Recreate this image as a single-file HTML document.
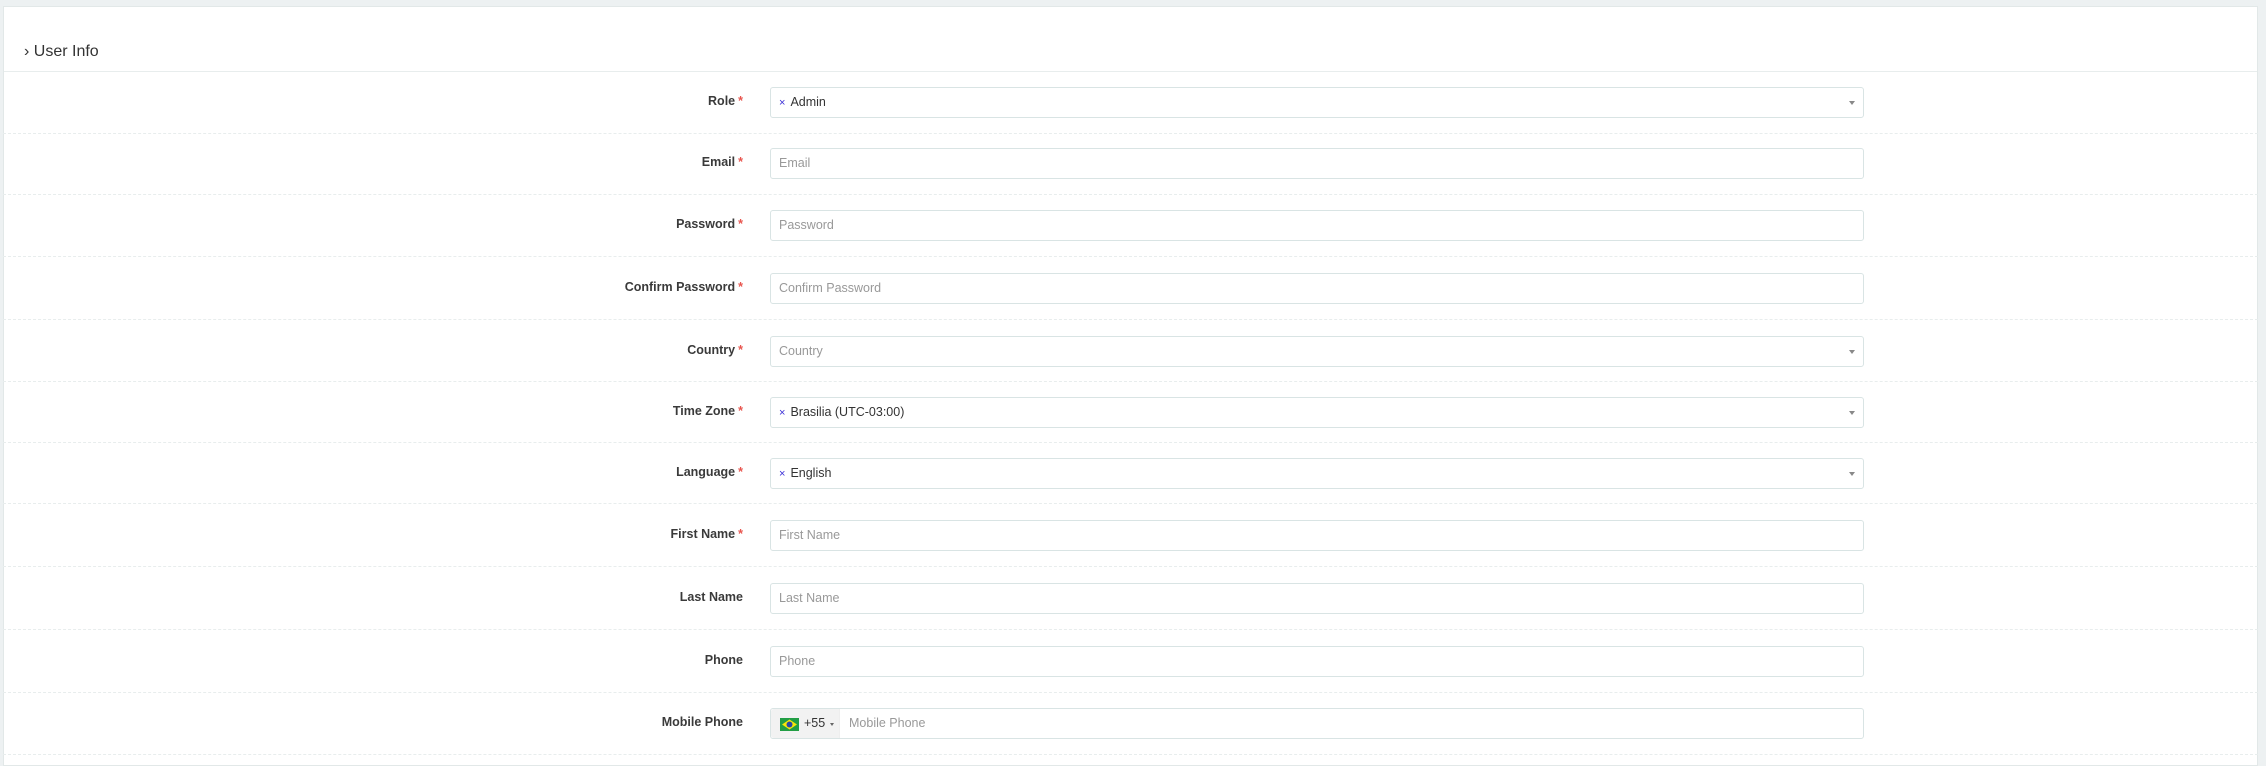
<!DOCTYPE html>
<html><head><meta charset="utf-8"><style>
*{box-sizing:border-box;margin:0;padding:0}
body{width:2266px;height:761px;background:#edf1f2;font-family:"Liberation Sans",sans-serif;overflow:hidden;position:relative}
.panel{position:absolute;left:3px;top:6px;width:2255px;height:760px;background:#fff;border:1px solid #e2e8e8}
.hdr{position:absolute;left:20px;top:36px;font-size:16px;color:#333}
.hline{position:absolute;left:0;right:0;top:64px;border-top:1px solid #e8eded}
.sep{position:absolute;left:0;right:0;border-top:1px dashed #e8eded}
.lbl{position:absolute;right:1523px;font-size:12.5px;font-weight:bold;color:#3a3a3a;text-align:right;white-space:nowrap}
.lbl b{color:#e8554e;font-weight:bold;margin-left:3px}
.inp{position:absolute;left:770px;width:1094px;height:31px;border:1px solid #d9e4e4;border-radius:3px;font-size:12.5px;color:#999;padding:0 8px;line-height:29px;white-space:nowrap}
.inp.v{color:#333}
.x{color:#3b2fd6;font-size:11px;margin-right:5px}
.car{position:absolute;right:8px;top:13px;width:0;height:0;border-left:3px solid transparent;border-right:3px solid transparent;border-top:4px solid #888}
.cc{position:absolute;left:0;top:0;bottom:0;width:69px;background:#f2f2f2;border-right:1px solid #eee;border-radius:3px 0 0 3px}
</style></head><body>
<div class="panel">
<div class="hdr">› User Info</div>
<div class="hline"></div>
</div>
<div style="position:absolute;left:3px;top:0;width:2255px">
<div class="sep" style="top:133px"></div><div class="sep" style="top:194px"></div><div class="sep" style="top:256px"></div><div class="sep" style="top:319px"></div><div class="sep" style="top:381px"></div><div class="sep" style="top:442px"></div><div class="sep" style="top:503px"></div><div class="sep" style="top:566px"></div><div class="sep" style="top:629px"></div><div class="sep" style="top:692px"></div><div class="sep" style="top:754px"></div>
</div>

<div class="lbl" style="top:94px">Role<b>*</b></div>
<div class="inp v" style="top:87px"><span class="x">×</span>Admin<span class="car"></span></div>

<div class="lbl" style="top:155px">Email<b>*</b></div>
<div class="inp" style="top:148px">Email</div>

<div class="lbl" style="top:217px">Password<b>*</b></div>
<div class="inp" style="top:210px">Password</div>

<div class="lbl" style="top:280px">Confirm Password<b>*</b></div>
<div class="inp" style="top:273px">Confirm Password</div>

<div class="lbl" style="top:343px">Country<b>*</b></div>
<div class="inp" style="top:336px">Country<span class="car"></span></div>

<div class="lbl" style="top:404px">Time Zone<b>*</b></div>
<div class="inp v" style="top:397px"><span class="x">×</span>Brasilia (UTC-03:00)<span class="car"></span></div>

<div class="lbl" style="top:465px">Language<b>*</b></div>
<div class="inp v" style="top:458px"><span class="x">×</span>English<span class="car"></span></div>

<div class="lbl" style="top:527px">First Name<b>*</b></div>
<div class="inp" style="top:520px">First Name</div>

<div class="lbl" style="top:590px">Last Name</div>
<div class="inp" style="top:583px">Last Name</div>

<div class="lbl" style="top:653px">Phone</div>
<div class="inp" style="top:646px">Phone</div>

<div class="lbl" style="top:715px">Mobile Phone</div>
<div class="inp" style="top:708px;padding-left:78px"><div class="cc">
<svg style="position:absolute;left:9px;top:9px" width="19" height="13" viewBox="0 0 19 13"><rect width="19" height="13" fill="#229e45"/><polygon points="9.5,1.5 17,6.5 9.5,11.5 2,6.5" fill="#f8e509"/><circle cx="9.5" cy="6.5" r="3" fill="#2b49a3"/></svg>
<span style="position:absolute;left:33px;top:0;color:#333">+55</span>
<span style="position:absolute;left:59px;top:14px;border-left:2px solid transparent;border-right:2px solid transparent;border-top:3px solid #666"></span>
</div>Mobile Phone</div>
</body></html>
